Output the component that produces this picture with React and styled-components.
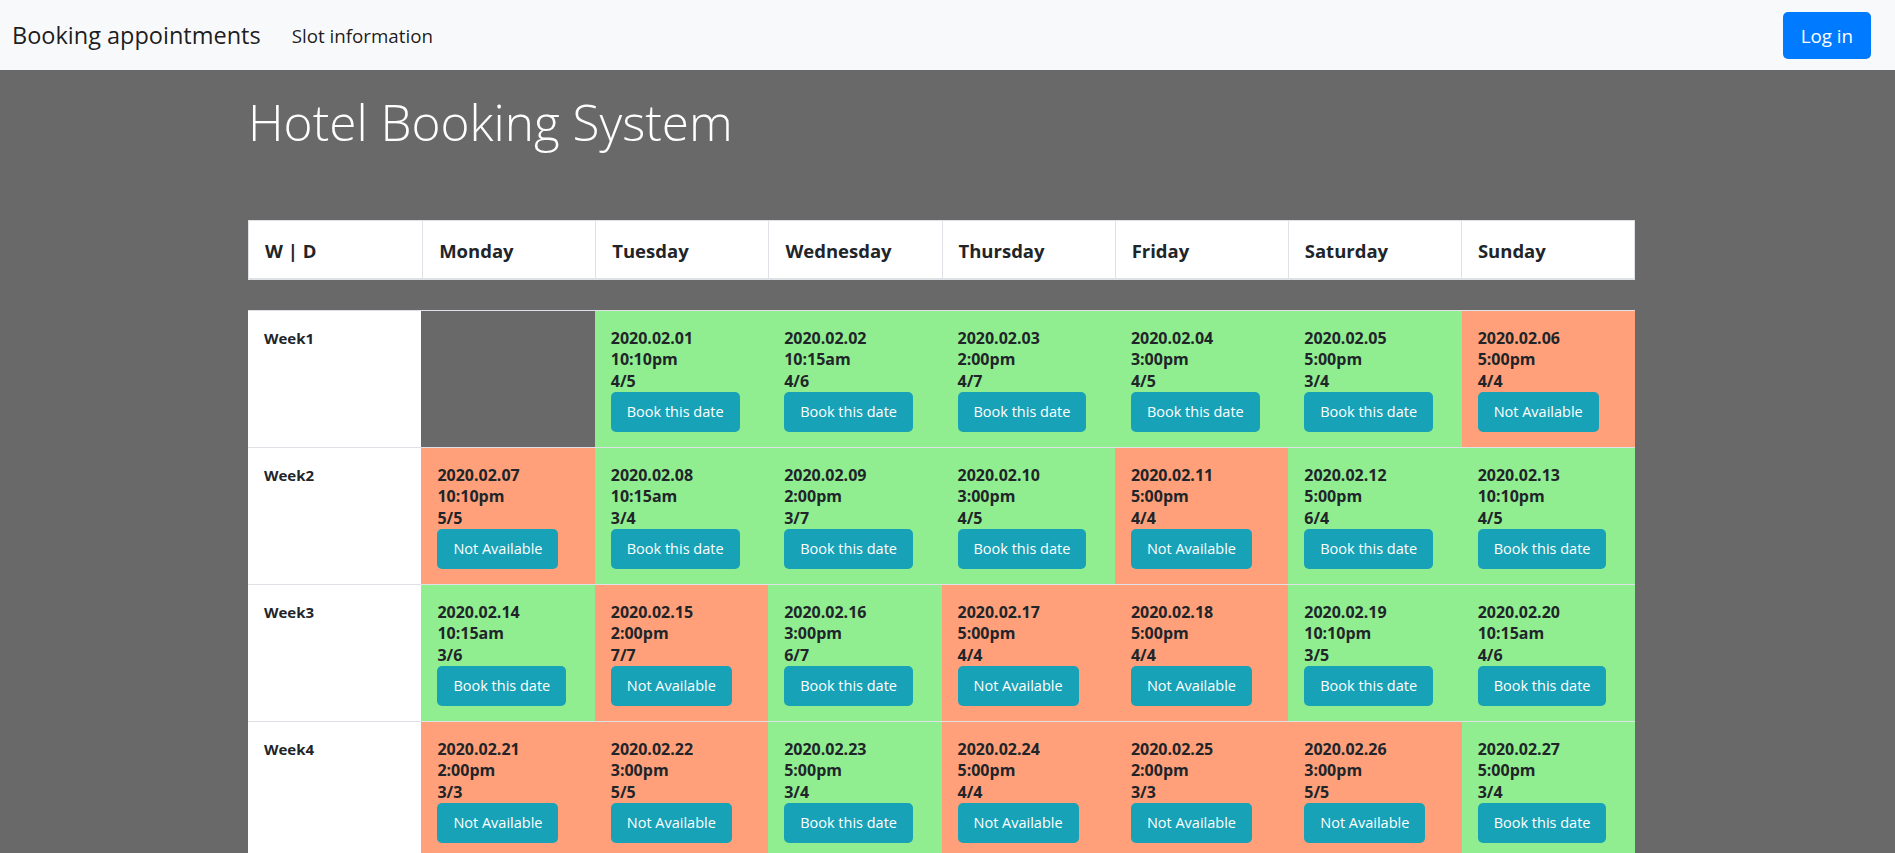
import styled, { createGlobalStyle } from "styled-components";

const GlobalStyle = createGlobalStyle`
  html, body {
    margin: 0;
    padding: 0;
  }
  body {
    background: #696969;
    font-family: "Open Sans", "Noto Sans", sans-serif;
    color: #212529;
  }
  ::-webkit-scrollbar {
    width: 4px;
  }
  ::-webkit-scrollbar-track {
    background: #f1f1f1;
  }
  ::-webkit-scrollbar-thumb {
    background: #c6c6c6;
  }
  ::-webkit-scrollbar-button:vertical:start:decrement {
    display: block;
    height: 20px;
    background: #f8f9fa;
  }
`;

const Navbar = styled.nav`
  display: flex;
  align-items: center;
  height: 70px;
  padding: 0 24px 0 12px;
  background: #f8f9fa;
`;

const Brand = styled.a`
  font-size: 23.5px;
  color: rgba(0, 0, 0, 0.9);
  margin-right: 31px;
`;

const NavLink = styled.a`
  font-size: 18.75px;
  color: rgba(0, 0, 0, 0.9);
`;

const LoginButton = styled.button`
  margin-left: auto;
  height: 47px;
  padding: 0 18px;
  border: none;
  border-radius: 5px;
  background: #007bff;
  color: #fff;
  font-family: inherit;
  font-size: 18.75px;
`;

const Main = styled.main`
  padding: 0 0 40px 248px;
`;

const Title = styled.h1`
  margin: 23px 0 69px;
  font-size: 49.5px;
  font-weight: 300;
  line-height: 58px;
  color: #fff;
`;

const Board = styled.div`
  width: 1387px;
`;

const HeaderRow = styled.div`
  display: grid;
  grid-template-columns: repeat(8, 1fr);
  background: #fff;
  border: 1px solid #dee2e6;
  border-bottom-width: 2px;
  margin-bottom: 30px;
`;

const HeadCell = styled.div`
  display: flex;
  align-items: center;
  height: 57px;
  padding: 2px 16px 0;
  box-sizing: border-box;
  font-size: 18.5px;
  font-weight: 700;
  & + & {
    border-left: 1px solid #dee2e6;
  }
`;

const Row = styled.div`
  display: grid;
  grid-template-columns: repeat(8, 1fr);
  border-top: 1px solid #dee2e6;
`;

const WeekCell = styled.div`
  background: #fff;
  padding: 17px 16px 15px;
  font-size: 15px;
  font-weight: 700;
  line-height: 21.33px;
`;

const DayCell = styled.div`
  padding: 17px 16px 15px;
  background: ${(p) =>
    p.$status === "free" ? "#90ee90" : p.$status === "full" ? "#ffa07a" : "transparent"};
`;

const Line = styled.div`
  font-size: 16px;
  font-weight: 700;
  line-height: 21.33px;
`;

const SlotButton = styled.button`
  display: block;
  height: 40px;
  padding: 0 16px;
  border: none;
  border-radius: 5px;
  background: #17a2b8;
  color: #fff;
  font-family: inherit;
  font-size: 14.5px;
`;

const days = ["W | D", "Monday", "Tuesday", "Wednesday", "Thursday", "Friday", "Saturday", "Sunday"];

const s = (date, time, count, status) => ({ date, time, count, status });

const weeks = [
  [
    null,
    s("2020.02.01", "10:10pm", "4/5", "free"),
    s("2020.02.02", "10:15am", "4/6", "free"),
    s("2020.02.03", "2:00pm", "4/7", "free"),
    s("2020.02.04", "3:00pm", "4/5", "free"),
    s("2020.02.05", "5:00pm", "3/4", "free"),
    s("2020.02.06", "5:00pm", "4/4", "full"),
  ],
  [
    s("2020.02.07", "10:10pm", "5/5", "full"),
    s("2020.02.08", "10:15am", "3/4", "free"),
    s("2020.02.09", "2:00pm", "3/7", "free"),
    s("2020.02.10", "3:00pm", "4/5", "free"),
    s("2020.02.11", "5:00pm", "4/4", "full"),
    s("2020.02.12", "5:00pm", "6/4", "free"),
    s("2020.02.13", "10:10pm", "4/5", "free"),
  ],
  [
    s("2020.02.14", "10:15am", "3/6", "free"),
    s("2020.02.15", "2:00pm", "7/7", "full"),
    s("2020.02.16", "3:00pm", "6/7", "free"),
    s("2020.02.17", "5:00pm", "4/4", "full"),
    s("2020.02.18", "5:00pm", "4/4", "full"),
    s("2020.02.19", "10:10pm", "3/5", "free"),
    s("2020.02.20", "10:15am", "4/6", "free"),
  ],
  [
    s("2020.02.21", "2:00pm", "3/3", "full"),
    s("2020.02.22", "3:00pm", "5/5", "full"),
    s("2020.02.23", "5:00pm", "3/4", "free"),
    s("2020.02.24", "5:00pm", "4/4", "full"),
    s("2020.02.25", "2:00pm", "3/3", "full"),
    s("2020.02.26", "3:00pm", "5/5", "full"),
    s("2020.02.27", "5:00pm", "3/4", "free"),
  ],
];

const Slot = ({ slot }) => {
  if (!slot) return <DayCell />;
  return (
    <DayCell $status={slot.status}>
      <Line>{slot.date}</Line>
      <Line>{slot.time}</Line>
      <Line>{slot.count}</Line>
      <SlotButton>{slot.status === "full" ? "Not Available" : "Book this date"}</SlotButton>
    </DayCell>
  );
};

const App = () => {
  return (
    <>
      <GlobalStyle />
      <Navbar>
        <Brand>Booking appointments</Brand>
        <NavLink>Slot information</NavLink>
        <LoginButton>Log in</LoginButton>
      </Navbar>
      <Main>
        <Title>Hotel Booking System</Title>
        <Board>
          <HeaderRow>
            {days.map((d) => (
              <HeadCell key={d}>{d}</HeadCell>
            ))}
          </HeaderRow>
          {weeks.map((week, i) => (
            <Row key={i}>
              <WeekCell>Week{i + 1}</WeekCell>
              {week.map((slot, j) => (
                <Slot key={j} slot={slot} />
              ))}
            </Row>
          ))}
        </Board>
      </Main>
    </>
  );
};

export default App;
